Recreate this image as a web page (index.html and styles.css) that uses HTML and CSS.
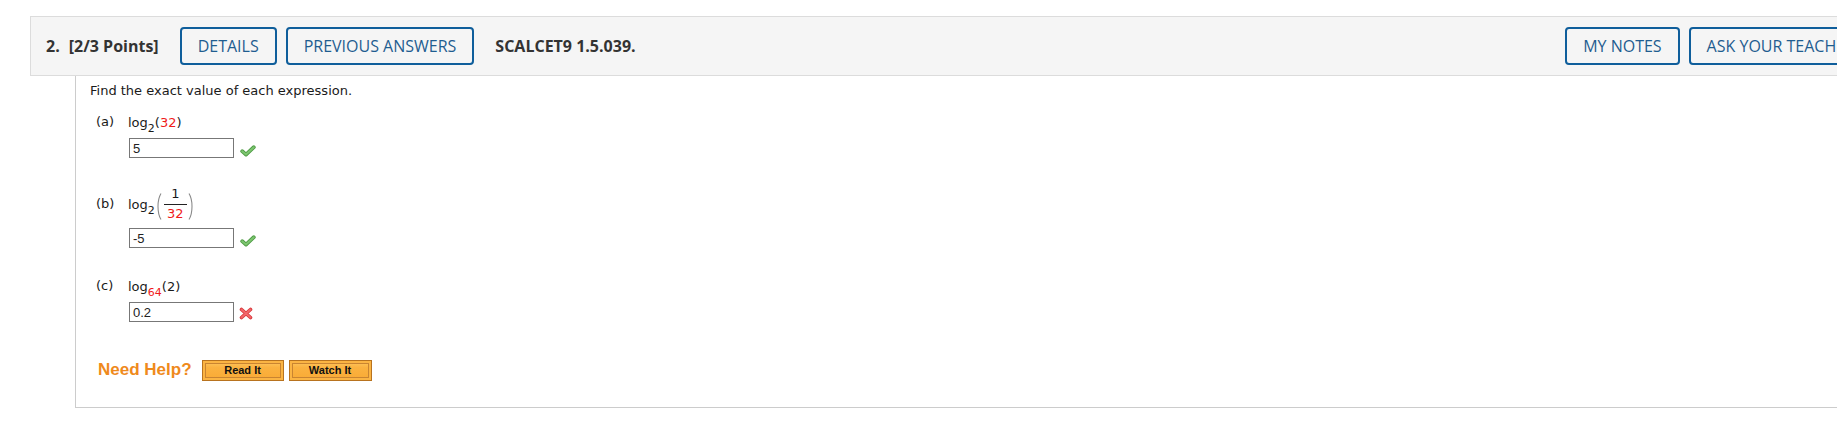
FILE: index.html
```html
<!DOCTYPE html>
<html>
<head>
<meta charset="utf-8">
<link rel="stylesheet" href="styles.css">
</head>
<body>
<div class="page">
  <div class="q-header">
    <span class="q-num">2.</span>
    <span class="q-points">[2/3 Points]</span>
    <button class="hbtn first">DETAILS</button>
    <button class="hbtn">PREVIOUS ANSWERS</button>
    <span class="q-code">SCALCET9 1.5.039.</span>
    <div class="h-right">
      <button class="hbtn">MY NOTES</button>
      <button class="hbtn">ASK YOUR TEACHER</button>
    </div>
  </div>
  <div class="q-body">
    <p class="intro">Find the exact value of each expression.</p>

    <div class="part part-first">
      <div class="q-line">
        <span class="lbl">(a)</span>
        <span class="expr">log<span class="sub">2</span>(<span class="red">32</span>)</span>
      </div>
      <div class="ans">
        <input class="field" type="text" value="5">
        <svg class="mark-ok" width="16" height="12" viewBox="0 0 16 12"><path d="M2.2 6.2 L6 9.6 L13.8 2.2" fill="none" stroke="#4d9a43" stroke-width="3.8" stroke-linecap="round" stroke-linejoin="round"/><path d="M2.2 6.2 L6 9.6 L13.8 2.2" fill="none" stroke="#7cc56f" stroke-width="2" stroke-linecap="round" stroke-linejoin="round"/></svg>
      </div>
    </div>

    <div class="part">
      <div class="q-line q-frac">
        <span class="lbl">(b)</span>
        <span class="expr">log<span class="sub">2</span></span>
        <svg class="paren" width="6" height="27" viewBox="0 0 6 27"><path d="M5 0.5 C1 7 1 20 5 26.5" fill="none" stroke="#8a8a8a" stroke-width="1.1"/></svg>
        <span class="frac">
          <span class="num">1</span>
          <span class="bar"></span>
          <span class="den red">32</span>
        </span>
        <svg class="paren" width="6" height="27" viewBox="0 0 6 27"><path d="M1 0.5 C5 7 5 20 1 26.5" fill="none" stroke="#8a8a8a" stroke-width="1.1"/></svg>
      </div>
      <div class="ans ans-b">
        <input class="field" type="text" value="-5">
        <svg class="mark-ok" width="16" height="12" viewBox="0 0 16 12"><path d="M2.2 6.2 L6 9.6 L13.8 2.2" fill="none" stroke="#4d9a43" stroke-width="3.8" stroke-linecap="round" stroke-linejoin="round"/><path d="M2.2 6.2 L6 9.6 L13.8 2.2" fill="none" stroke="#7cc56f" stroke-width="2" stroke-linecap="round" stroke-linejoin="round"/></svg>
      </div>
    </div>

    <div class="part part-c">
      <div class="q-line">
        <span class="lbl">(c)</span>
        <span class="expr">log<span class="sub red">64</span>(2)</span>
      </div>
      <div class="ans">
        <input class="field" type="text" value="0.2">
        <svg class="mark-bad" width="14" height="13" viewBox="0 0 14 13"><path d="M2.5 2.5 L11.5 10.5 M11.5 2.5 L2.5 10.5" fill="none" stroke="#d9383c" stroke-width="3.6" stroke-linecap="round"/><path d="M2.5 2.5 L11.5 10.5 M11.5 2.5 L2.5 10.5" fill="none" stroke="#f2676a" stroke-width="1.8" stroke-linecap="round"/></svg>
      </div>
    </div>

    <div class="help-row">
      <span class="need-help">Need Help?</span>
      <button class="help-btn read">Read It</button>
      <button class="help-btn watch">Watch It</button>
    </div>
  </div>
</div>
</body>
</html>
```

FILE: styles.css
```css
html, body {
  margin: 0;
  padding: 0;
  overflow: hidden;
  background: #ffffff;
}

.page {
  padding: 16px 0 0 30px;
  width: 1859px;
}

.q-header {
  box-sizing: border-box;
  height: 60px;
  display: flex;
  align-items: center;
  padding: 0 15px 0 15px;
  background: #f5f5f5;
  border: 1px solid #dcdcdc;
  font-family: "Open Sans", "Liberation Sans", sans-serif;
  font-size: 16px;
  color: #333333;
}

.q-num {
  font-weight: 700;
  margin-right: 9px;
}

.q-points {
  font-weight: 700;
  margin-right: 21px;
}

.hbtn {
  box-sizing: border-box;
  height: 38px;
  padding: 0 16px;
  margin: 0 9px 0 0;
  border: 2px solid #0f5e9b;
  border-radius: 4px;
  background: transparent;
  font-family: "Open Sans", "Liberation Sans", sans-serif;
  font-size: 16px;
  color: #1f5d90;
  white-space: nowrap;
}

.q-code {
  font-weight: 700;
  margin-left: 12px;
  color: #333333;
}

.h-right {
  margin-left: auto;
  display: flex;
  align-items: center;
}

.h-right .hbtn:last-child {
  margin-right: 0;
}

.q-body {
  margin-left: 45px;
  border-left: 1px solid #cccccc;
  border-bottom: 1px solid #cccccc;
  padding: 7px 0 27px 14px;
  font-family: "DejaVu Sans", Verdana, sans-serif;
  font-size: 13px;
  color: #1a1a1a;
}

.intro {
  margin: 0;
  line-height: 15px;
}

.part {
  margin-left: 6px;
  margin-top: 29px;
}

.part-first {
  margin-top: 14px;
}

.part-c {
  margin-top: 28px;
}

.q-line {
  display: flex;
  align-items: center;
  height: 20px;
  line-height: 20px;
}

.lbl {
  width: 32px;
  flex: none;
}

.expr {
  line-height: 15px;
}

.sub {
  font-size: 11px;
  vertical-align: -5px;
  line-height: 0;
}

.red {
  color: #f01a1a;
}

.q-frac {
  height: 34px;
}

.paren {
  flex: none;
  margin-top: 5px;
}

.paren:first-of-type {
  margin-left: 1px;
}

.frac {
  display: flex;
  flex-direction: column;
  align-items: center;
  margin: 0 1px 0 2px;
}

.num,
.den {
  line-height: 14px;
}

.bar {
  display: block;
  width: 23px;
  height: 1px;
  background: #222222;
  margin: 3px 0 2px;
}

.ans {
  display: flex;
  align-items: center;
  margin-top: 6px;
  margin-left: 33px;
}

.ans-b {
  margin-top: 7px;
}

.field {
  box-sizing: border-box;
  width: 105px;
  height: 20px;
  margin: 0;
  padding: 0 3px;
  border: 1px solid #777777;
  border-radius: 0;
  font-family: "Liberation Sans", Arial, sans-serif;
  font-size: 13px;
  color: #222222;
  background: #ffffff;
}

.mark-ok {
  margin-left: 6px;
  margin-top: 6px;
}

.mark-bad {
  margin-left: 5px;
  margin-top: 2px;
}

.help-row {
  display: flex;
  align-items: center;
  height: 20px;
  margin-top: 38px;
}

.need-help {
  margin-left: 8px;
  font-family: "Liberation Sans", Arial, sans-serif;
  font-weight: 700;
  font-size: 17px;
  color: #ef8a1c;
}

.help-btn {
  box-sizing: border-box;
  height: 21px;
  width: 82px;
  padding: 0;
  margin: 0 0 0 5px;
  border: 1px solid #b8731f;
  border-radius: 0;
  background: linear-gradient(#ffc863, #fbb240 35%, #f9aa35);
  box-shadow: inset 0 0 0 2px #fbb443, inset 0 0 0 3px #c98431;
  font-family: "Liberation Sans", Arial, sans-serif;
  font-weight: 700;
  font-size: 11px;
  color: #111111;
}

.help-btn.read {
  margin-left: 10px;
}

.help-btn.watch {
  width: 83px;
}
```
